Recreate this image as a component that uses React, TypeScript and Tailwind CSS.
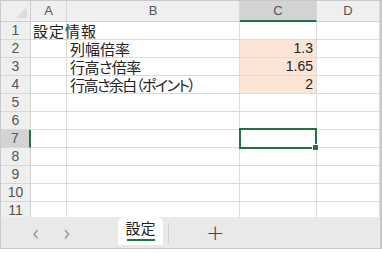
import React from "react";

const cols = [
  { key: "A", w: "w-[36px]" },
  { key: "B", w: "w-[173px]" },
  { key: "C", w: "w-[77px]" },
  { key: "D", w: "w-[63px]" },
];

type Cell = { text?: string; align?: "left" | "right"; indent?: boolean; fill?: boolean; extra?: string };

const rows: Record<number, Record<string, Cell>> = {
  1: { A: { text: "設定情報", extra: "tracking-[1px]" } },
  2: { B: { text: "列幅倍率", indent: true }, C: { text: "1.3", align: "right", fill: true } },
  3: { B: { text: "行高さ倍率", indent: true, extra: "tracking-[-0.5px]" }, C: { text: "1.65", align: "right", fill: true } },
  4: {
    B: { text: "行高さ余白（ポイント）", indent: true, extra: "tracking-[-1.5px]" },
    C: { text: "2", align: "right", fill: true },
  },
};

export default function App() {
  const rowNums = Array.from({ length: 11 }, (_, i) => i + 1);

  return (
    <div className="w-[382px] h-[253px] bg-white overflow-hidden font-['Noto_Sans_CJK_JP',sans-serif] text-[#222] [font-feature-settings:'palt'_1]">
      <div className="border-t border-l border-r-2 border-b border-[#c9c9c9] h-[249px] flex flex-col">
        {/* sheet grid */}
        <div className="h-[216px] overflow-hidden">
          {/* column headers */}
          <div className="flex h-[21px]">
            <div className="w-[30px] bg-[#efefef] border-r border-b border-[#cfcfcf] relative">
              <svg className="absolute right-[3px] bottom-[3px]" width="11" height="11" viewBox="0 0 11 11">
                <path d="M11 0 L11 11 L0 11 Z" fill="#dcdcdc" />
              </svg>
            </div>
            {cols.map((c) => (
              <div
                key={c.key}
                className={`${c.w} flex items-center justify-center text-[13px] font-['Liberation_Sans',sans-serif] text-[#555] border-r border-[#d8d8d8] ${
                  c.key === "C" ? "bg-[#d3d3d3] border-b-2 border-b-[#217346]" : "bg-[#efefef] border-b border-b-[#cfcfcf]"
                }`}
              >
                {c.key}
              </div>
            ))}
          </div>

          {rowNums.map((n) => (
            <div key={n} className="flex h-[18px]">
              <div
                className={`w-[30px] flex items-center justify-center text-[14px] font-['Liberation_Sans',sans-serif] text-[#555] border-b border-[#d8d8d8] ${
                  n === 7 ? "bg-[#d3d3d3] border-r-2 border-r-[#217346]" : "bg-[#efefef] border-r border-r-[#cfcfcf]"
                }`}
              >
                {n}
              </div>
              {cols.map((c) => {
                const cell = rows[n]?.[c.key];
                const selected = n === 7 && c.key === "C";
                return (
                  <div
                    key={c.key}
                    className={`${c.w} relative border-r border-b border-[#dcdcdc] ${cell?.fill ? "bg-[#fce4d6]" : "bg-white"}`}
                  >
                    {cell?.text && (
                      <span
                        className={`absolute z-10 top-0 h-[17px] leading-[17px] whitespace-nowrap ${cell.extra ?? ""} ${
                          cell.align === "right"
                            ? "right-[3px] text-[14px] font-['Liberation_Sans',sans-serif]"
                            : cell.indent
                            ? "left-[3px] text-[15px]"
                            : "left-[2px] text-[15px]"
                        }`}
                      >
                        {cell.text}
                      </span>
                    )}
                    {selected && (
                      <div className="absolute z-20 -left-[1px] -top-[2px] right-[-1px] bottom-[-2px] border-2 border-[#217346]">
                        <div className="absolute -right-[4px] -bottom-[4px] w-[7px] h-[7px] bg-[#217346] border border-white" />
                      </div>
                    )}
                  </div>
                );
              })}
            </div>
          ))}
        </div>

        {/* sheet tabs */}
        <div className="flex-1 bg-[#e9e9e9] flex items-start">
          <div className="w-[117px] h-full flex items-center text-[#9a9a9a] text-[18px] font-['DejaVu_Sans',sans-serif]">
            <span className="ml-[31px] scale-y-125">‹</span>
            <span className="ml-[24px] scale-y-125">›</span>
          </div>
          <div className="w-[45px] h-[28px] bg-white rounded-t-[6px] flex flex-col items-center pt-[1px]">
            <span className="text-[15px] leading-[20px]">設定</span>
            <div className="w-[28px] h-[2px] bg-[#217346] mt-[1px]" />
          </div>
          <div className="h-full flex items-center">
            <div className="ml-[5px] w-px h-[20px] bg-[#cfcfcf]" />
            <span className="ml-[37px] text-[22px] font-light text-[#444] leading-none font-['DejaVu_Sans',sans-serif]">+</span>
          </div>
        </div>
      </div>
    </div>
  );
}
